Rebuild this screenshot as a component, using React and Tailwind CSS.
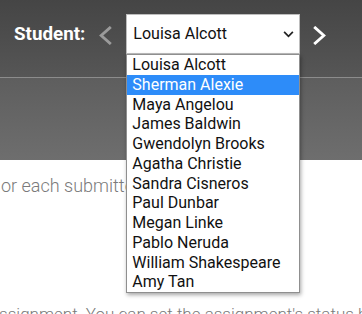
const STUDENTS = [
  "Louisa Alcott",
  "Sherman Alexie",
  "Maya Angelou",
  "James Baldwin",
  "Gwendolyn Brooks",
  "Agatha Christie",
  "Sandra Cisneros",
  "Paul Dunbar",
  "Megan Linke",
  "Pablo Neruda",
  "William Shakespeare",
  "Amy Tan",
];

function Chevron({ dir, className }) {
  return (
    <svg viewBox="0 0 14 20" className={className} fill="none" stroke="currentColor" strokeWidth="3" strokeLinecap="square">
      {dir === "left" ? <path d="M12 2 3 10l9 8" /> : <path d="M2 2l9 8-9 8" />}
    </svg>
  );
}

export default function App() {
  return (
    <div className="relative w-[362px] h-[314px] overflow-hidden bg-white font-['Roboto',sans-serif]">
      {/* header bar */}
      <div className="h-[77px] bg-gradient-to-b from-[#454545] to-[#565656] flex items-start pt-[14px]">
        <span className="ml-[14px] mt-[7px] text-[18.8px] font-bold text-white leading-[26px]">Student:</span>
        <Chevron dir="left" className="ml-[13px] mt-[12px] w-[14px] h-[19px] text-[#9b9b9b]" />
        <div className="relative ml-[14px]">
          <div className="w-[174px] h-[40px] bg-white border border-[#bdbdbd] flex items-center pl-[6px] pr-[5px]">
            <span className="flex-1 text-[16px] text-[#111]">Louisa Alcott</span>
            <svg viewBox="0 0 12 8" className="w-[11px] h-[7px]" fill="none" stroke="#222" strokeWidth="2">
              <path d="M1 1l5 5 5-5" />
            </svg>
          </div>
          {/* open list */}
          <ul className="absolute left-0 top-[40px] w-[174px] bg-white border border-[#8f8f8f] shadow-[1px_2px_4px_rgba(0,0,0,0.35)] z-10">
            {STUDENTS.map((s, i) => (
              <li
                key={s}
                className={`h-[19.75px] leading-[19.75px] pl-[5px] text-[16px] ${i === 1 ? "bg-[#2d8cf9] text-white" : "text-[#111]"}`}
              >
                {s}
              </li>
            ))}
          </ul>
        </div>
        <Chevron dir="right" className="ml-[13px] mt-[12px] w-[14px] h-[19px] text-white" />
      </div>
      <div className="h-px bg-[#8c8c8c]" />
      <div className="h-[82px] bg-gradient-to-b from-[#5e5e5e] to-[#6e6e6e]" />

      {/* page content */}
      <p className="mt-[14px] ml-[1px] text-[18px] font-light text-[#7a7a7a] whitespace-nowrap leading-[24px]">
        or each submitted assignment.
      </p>
      <p className="mt-[104px] -ml-[10px] text-[17px] font-light text-[#7a7a7a] whitespace-nowrap leading-[24px]">
        assignment. You can set the assignment's status based
      </p>
    </div>
  );
}
